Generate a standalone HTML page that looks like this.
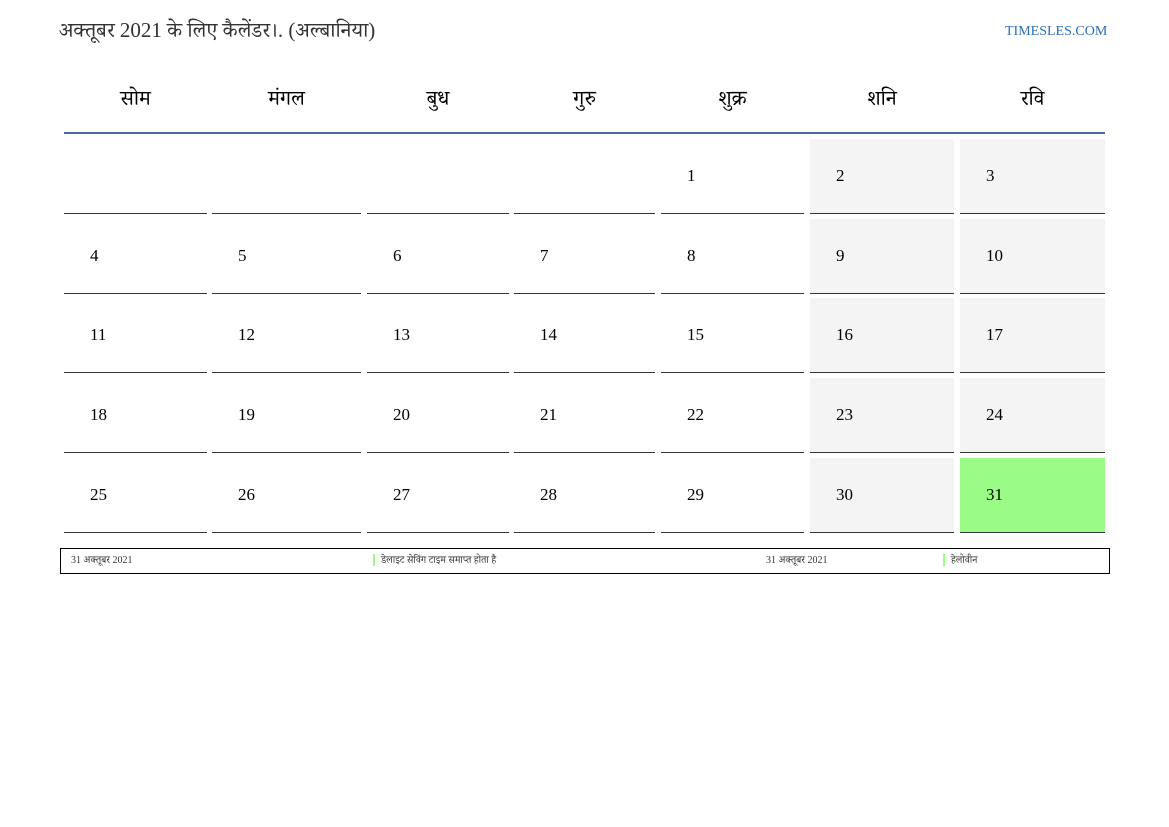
<!DOCTYPE html>
<html><head><meta charset="utf-8"><style>
body{margin:0;width:1169px;height:827px;background:#fff;position:relative;font-family:"Liberation Serif","Noto Serif Devanagari","Noto Sans Devanagari",serif;color:#000;overflow:hidden}
.a{position:absolute}
.title{left:59px;top:18px;font-size:21px;color:#333}
.site{left:1005px;top:24px;font-size:14px;color:#2a6eb8}
.h{top:86px;font-size:21px;text-align:center}
.cell{position:absolute;height:74px;border-bottom:1px solid #333}
.cell span{position:absolute;left:26px;top:27px;font-size:17px}
.we{background:#f4f4f4}
.ft{font-size:10px;color:#333;top:555px}
</style></head><body>
<div class="a title">अक्तूबर 2021 के लिए कैलेंडर।. (अल्बानिया)</div>
<div class="a site">TIMESLES.COM</div>
<div class="a h" style="left:64px;width:143px">सोम</div>
<div class="a h" style="left:212px;width:149px">मंगल</div>
<div class="a h" style="left:367px;width:142px">बुध</div>
<div class="a h" style="left:514px;width:141px">गुरु</div>
<div class="a h" style="left:661px;width:143px">शुक्र</div>
<div class="a h" style="left:810px;width:144px">शनि</div>
<div class="a h" style="left:960px;width:145px">रवि</div>
<div class="a" style="left:64px;top:132px;width:1041px;height:2px;background:#4a6a9a"></div>
<div id="g"></div>
<script>
var xs=[[64,143],[212,149],[367,142],[514,141],[661,143],[810,144],[960,145]];
var ys=[139,219,298,378,458];var h='';
for(var r=0;r<5;r++)for(var c=0;c<7;c++){var n=r*7+c-3;var cls='cell'+(c>=5?' we':'');var st='left:'+xs[c][0]+'px;top:'+ys[r]+'px;width:'+xs[c][1]+'px;';
if(n==31)st+='background:#9afc86;';
h+='<div class="'+cls+'" style="'+st+'">'+(n>=1&&n<=31?'<span>'+n+'</span>':'')+'</div>';}
document.getElementById('g').innerHTML=h;
</script>
<div class="a" style="left:60px;top:548px;width:1048px;height:24px;border:1px solid #000"></div>
<div class="a ft" style="left:71px">31 अक्तूबर 2021</div>
<div class="a" style="left:373px;top:554px;width:2px;height:12px;background:#9afc86"></div>
<div class="a ft" style="left:381px">डेलाइट सेविंग टाइम समाप्त होता है</div>
<div class="a ft" style="left:766px">31 अक्तूबर 2021</div>
<div class="a" style="left:943px;top:554px;width:2px;height:12px;background:#9afc86"></div>
<div class="a ft" style="left:951px">हेलोवीन</div>
</body></html>
